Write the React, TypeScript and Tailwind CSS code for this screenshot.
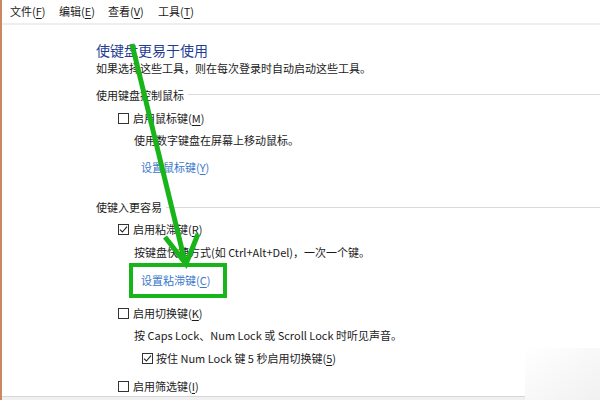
import React from 'react';

const font = { fontFamily: '"Noto Sans CJK SC", "Noto Sans", sans-serif' };

// underlined access key, e.g. (M)
const Key: React.FC<{ k: string }> = ({ k }) => (
  <span>
    (<span className="underline underline-offset-2">{k}</span>)
  </span>
);

const CheckBox: React.FC<{ checked?: boolean }> = ({ checked }) => (
  <span className="w-[11px] h-[11px] border border-[#333333] bg-white flex items-center justify-center shrink-0">
    {checked && (
      <svg width="9" height="9" viewBox="0 0 9 9">
        <path d="M1 4.6 L3.4 7 L8 1.6" fill="none" stroke="#222222" strokeWidth="1.1" />
      </svg>
    )}
  </span>
);

const Section: React.FC<{ title: string; className: string }> = ({ title, className }) => (
  <div className={`h-[20px] flex items-center ${className}`}>
    <span>{title}</span>
    <span className="flex-1 h-px bg-[#dadada] ml-1" />
  </div>
);

export default function App() {
  return (
    <div
      className="relative w-[600px] h-[400px] overflow-hidden bg-white border-l-2 border-[#c98762] flex flex-col text-[11px] text-[#1b1b1b]"
      style={font}
    >
      {/* menu bar */}
      <div className="h-[25px] shrink-0 flex items-center pl-[8px] border-b-2 border-[#eeeeee]">
        <span className="w-[49px]">文件<Key k="F" /></span>
        <span className="w-[49px]">编辑<Key k="E" /></span>
        <span className="w-[50px]">查看<Key k="V" /></span>
        <span>工具<Key k="T" /></span>
      </div>

      {/* content */}
      <div className="flex-1 overflow-hidden pl-[94px] flex flex-col">
        <div className="h-[20px] mt-[15px] flex items-center text-[14px] text-[#1f3e93]">使键盘更易于使用</div>
        <div className="h-[16px] flex items-center">如果选择这些工具，则在每次登录时自动启动这些工具。</div>

        <Section title="使用键盘控制鼠标" className="mt-[9px]" />
        <div className="h-[20px] mt-[4px] ml-[22px] flex items-center gap-[4px]">
          <CheckBox />
          <span>启用鼠标键<Key k="M" /></span>
        </div>
        <div className="h-[20px] mt-[2px] ml-[38px] flex items-center">使用数字键盘在屏幕上移动鼠标。</div>
        <div className="h-[20px] mt-[7px] ml-[45px] flex items-center text-[#3a78cc]">
          <span>设置鼠标键<Key k="Y" /></span>
        </div>

        <Section title="使键入更容易" className="mt-[20px]" />
        <div className="h-[20px] mt-[2px] ml-[22px] flex items-center gap-[4px]">
          <CheckBox checked />
          <span>启用粘滞键<Key k="R" /></span>
        </div>
        <div className="h-[20px] mt-[3px] ml-[38px] flex items-center">按键盘快捷方式(如 Ctrl+Alt+Del)，一次一个键。</div>
        <div className="h-[35px] w-[98px] mt-[1px] ml-[33px] border-[4px] border-[#19b419] flex items-center pl-[8px] text-[#3a78cc]">
          <span>设置粘滞键<Key k="C" /></span>
        </div>

        <div className="h-[20px] mt-[6px] ml-[22px] flex items-center gap-[4px]">
          <CheckBox />
          <span>启用切换键<Key k="K" /></span>
        </div>
        <div className="h-[20px] mt-[2px] ml-[38px] flex items-center">按 Caps Lock、Num Lock 或 Scroll Lock 时听见声音。</div>
        <div className="h-[20px] mt-[3px] ml-[46px] flex items-center gap-[3px]">
          <CheckBox checked />
          <span>按住 Num Lock 键 5 秒启用切换键<Key k="5" /></span>
        </div>
        <div className="h-[20px] mt-[8px] ml-[22px] flex items-center gap-[4px] shrink-0">
          <CheckBox />
          <span>启用筛选键<Key k="I" /></span>
        </div>
      </div>

      {/* bottom edge */}
      <div className="h-[4px] shrink-0 border-t border-[#d6d6d6] bg-[#f0f0f0]" />

      {/* faded corner bottom right */}
      <div className="absolute right-0 bottom-0 w-[75px] h-[52px] bg-gradient-to-br from-white to-[#f1f1f1]" />

      {/* green annotation arrow */}
      <svg className="absolute left-0 top-0 pointer-events-none" width="600" height="400">
        <line x1="130" y1="44" x2="183" y2="262" stroke="#19b419" strokeWidth="5" />
        <polyline points="163,237 184,264 196,234" fill="none" stroke="#19b419" strokeWidth="5" strokeLinejoin="miter" />
      </svg>
    </div>
  );
}
